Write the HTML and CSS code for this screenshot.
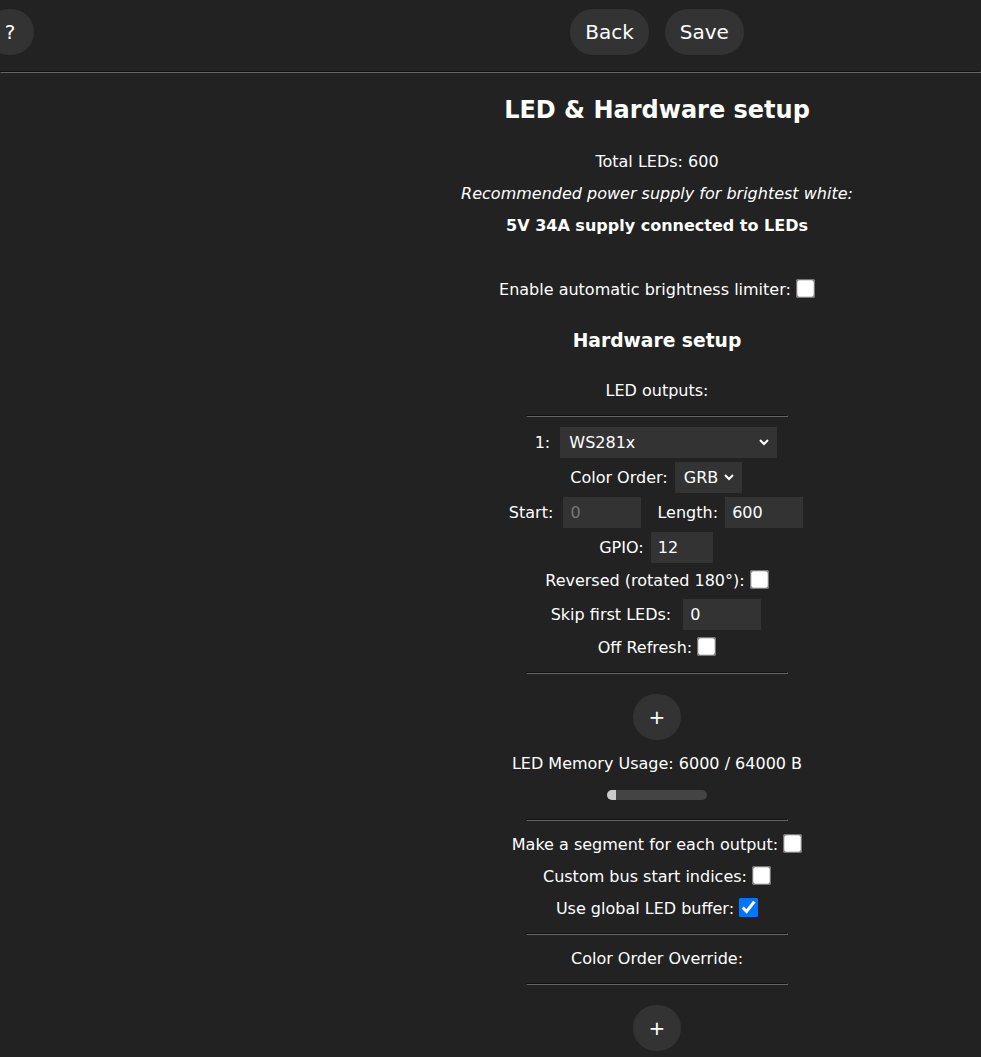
FILE: index.html
```html
<!DOCTYPE html>
<html lang="en">
<head>
    <meta charset="UTF-8">
    <meta name="viewport" content="width=device-width, initial-scale=1.0">
    <title>LED Settings</title>
    <link rel="stylesheet" href="styles.css">
</head>
<body>
    <div class="toprow">
        <div class="helpB"><button type="button">?</button></div>
        <div class="btns">
            <button type="button">Back</button><button type="button">Save</button>
        </div>
        <hr>
    </div>

    <div class="page">
        <h2>LED &amp; Hardware setup</h2>
        Total LEDs: <span id="lc">600</span><br>
        <i>Recommended power supply for brightest white:</i><br>
        <b id="psu">5V 34A supply connected to LEDs</b><br>
        <br>
        Enable automatic brightness limiter: <input type="checkbox"><br>

        <h3>Hardware setup</h3>
        LED outputs:<br>
        <hr class="sml">

        <div class="bus">
            <div class="row fld">1: <select class="type"><option>WS281x</option></select></div>
            <div class="row fld">Color Order: <select class="co"><option>GRB</option></select></div>
            <div class="row fld">
                Start: <input type="number" class="dis" value="0" disabled>
                <span class="len">Length: <input type="number" value="600"></span>
            </div>
            <div class="row fld">GPIO: <input type="number" class="pin" value="12"></div>
            <div class="row">Reversed (rotated 180°): <input type="checkbox"></div>
            <div class="row fld">Skip first LEDs: <input type="number" class="skip" value="0"></div>
            <div class="row">Off Refresh: <input type="checkbox"></div>
        </div>
        <hr class="sml">

        <button type="button" class="plus">+</button><br>
        LED Memory Usage: <span id="m0">6000 / 64000 B</span><br>
        <div class="mem"><div class="mem-fill" style="width: 9%"></div></div>
        <hr class="sml">

        Make a segment for each output: <input type="checkbox"><br>
        Custom bus start indices: <input type="checkbox"><br>
        Use global LED buffer: <input type="checkbox" checked><br>
        <hr class="sml">

        Color Order Override:<br>
        <hr class="sml">
        <button type="button" class="plus">+</button>
    </div>
</body>
</html>
```

FILE: styles.css
```css
/* base */
body {
    font-family: "DejaVu Sans", Verdana, sans-serif;
    text-align: center;
    background: #222;
    color: #fff;
    line-height: 200%;
    margin: 0;
    overflow: hidden;
}

.page,
.btns {
    margin-left: 333px;
    width: 648px;
}

hr {
    border-color: #666;
    margin: 8px 0;
}

hr.sml {
    width: 260px;
    margin: 8px auto;
}

h2 {
    font-size: 24px;
    margin: 21px 0 20px;
}

h3 {
    font-size: 18.72px;
    margin: 18.7px 0 18px;
}

/* buttons */
button {
    background: #333;
    color: #fff;
    font-family: "DejaVu Sans", Verdana, sans-serif;
    border: 0.3ch solid #333;
    border-radius: 24px;
    display: inline-block;
    font-size: 20px;
    margin: 9px 8px 8px;
    padding: 8px 12px;
    min-width: 48px;
    cursor: pointer;
    vertical-align: top;
}

.toprow {
    position: relative;
    line-height: normal;
}

.helpB {
    position: absolute;
    left: -22px;
    top: 0;
}

.plus {
    margin: 12px 8px 8px;
}

/* fields */
input, select {
    background: #333;
    color: #fff;
    font-family: "DejaVu Sans", Verdana, sans-serif;
    border: 0.5ch solid #333;
    font-size: medium;
    margin: 2px;
}

input[type="number"] {
    width: 4em;
}

input.pin {
    width: 3em;
}

input.dis {
    color: #777;
    margin-left: 5px;
}

input[type="checkbox"] {
    transform: scale(1.5);
    margin: 0 3px;
}

select.type {
    width: 217px;
    margin-left: 5px;
}

select.co {
    width: 67px;
}

.bus .row {
    line-height: 32px;
}

.bus .row.fld {
    line-height: 35px;
}

.bus .len {
    margin-left: 9px;
}

.bus input.skip {
    margin-left: 7px;
}

/* memory bar */
.mem {
    width: 100px;
    height: 10px;
    margin: 10px auto 19px;
    background: #444;
    border-radius: 5px;
    overflow: hidden;
}

.mem-fill {
    height: 100%;
    background: #ccc;
}
```
